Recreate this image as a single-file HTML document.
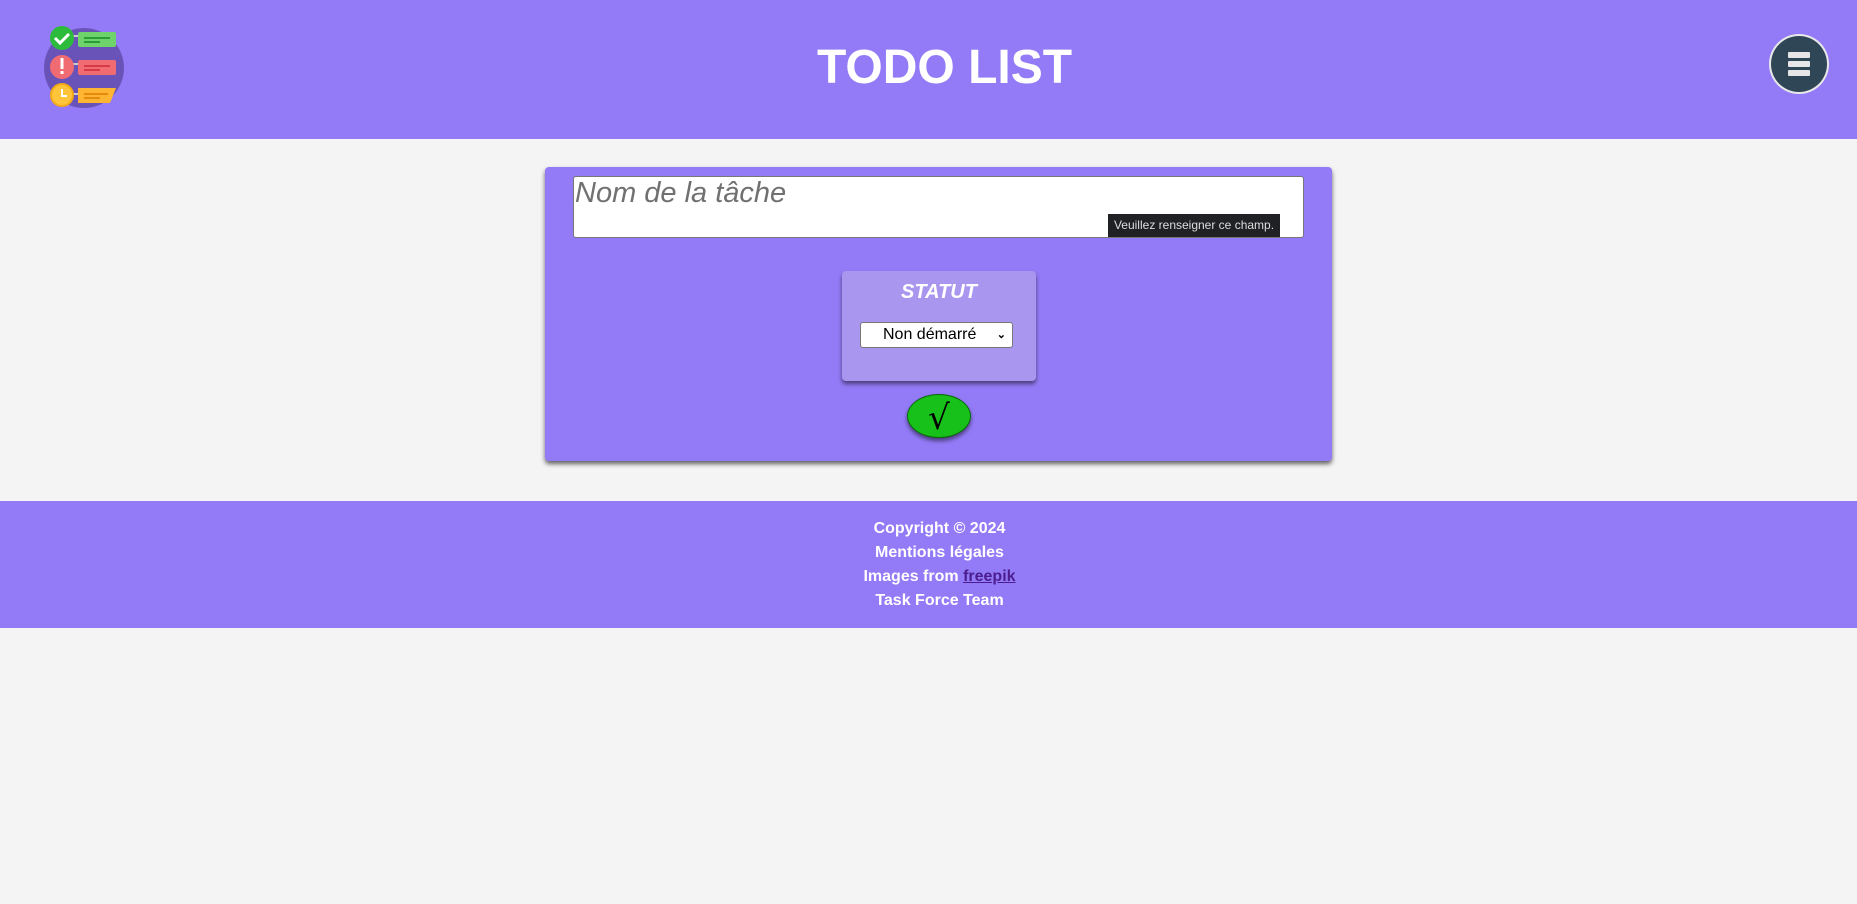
<!DOCTYPE html>
<html><head><meta charset="utf-8"><style>
*{box-sizing:border-box;margin:0;padding:0}
body{width:1857px;height:904px;background:#f4f4f4;font-family:"Liberation Sans",Arial,sans-serif;position:relative;overflow:hidden}
header{position:absolute;left:0;top:0;width:1857px;height:139px;background:#937bf7}
h1{position:absolute;left:16px;width:100%;top:39px;text-align:center;color:#fff;font-size:48px;font-weight:bold;line-height:58px}
.card{position:absolute;left:545px;top:167px;width:787px;height:294px;background:#937bf7;border-radius:4px;box-shadow:0 3px 5px rgba(0,0,0,.6)}
.ta{position:absolute;left:28px;top:9px;width:731px;height:62px;background:#fff;border:1px solid #777;border-radius:3px}
.ta span{position:absolute;left:1px;top:0;font-size:29px;font-style:italic;color:#707070}
.tip{position:absolute;left:563px;top:47px;width:172px;height:23px;background:#202124;color:#ddd;font-size:12px;line-height:23px;text-align:center}
.st{position:absolute;left:297px;top:104px;width:194px;height:110px;background:#a996ef;border-radius:4px;box-shadow:0 3px 4px rgba(0,0,0,.5)}
.st b{position:absolute;top:10px;width:100%;text-align:center;color:#fff;font-style:italic;font-size:20px}
.sel{position:absolute;left:18px;top:51px;width:153px;height:26px;background:#fff;border:1px solid #777;border-radius:3px;font-size:16px;line-height:24px;padding-left:22px}
.sel i{position:absolute;right:6px;top:0;font-style:normal;font-size:11px;font-weight:bold}
.btn{position:absolute;left:362px;top:227px;width:64px;height:44px;border-radius:50%;background:#18c11a;border:1px solid #0a6a0a;box-shadow:0 3px 4px rgba(0,0,0,.5);text-align:center;font-size:34px;line-height:46px;color:#000;font-family:"DejaVu Sans",sans-serif}
footer{position:absolute;left:0;top:501px;width:1857px;height:127px;background:#937bf7;color:#fff;font-weight:bold;font-size:16px;line-height:24px;text-align:center;padding-top:16px;padding-left:22px}
footer a{color:#4b1d8f;text-decoration:underline}
</style></head><body>
<header>
<svg style="position:absolute;left:40px;top:24px" width="88" height="88" viewBox="0 0 88 88">
<circle cx="44" cy="44" r="40" fill="#6a53b8"/>
<line x1="20" y1="12" x2="40" y2="12" stroke="#ccc" stroke-width="2"/>
<line x1="20" y1="40" x2="40" y2="40" stroke="#ccc" stroke-width="2"/>
<line x1="20" y1="70" x2="40" y2="70" stroke="#ccc" stroke-width="2"/>
<circle cx="22" cy="14" r="12" fill="#2dbb3c"/>
<path d="M15 14l5 5 9-9" stroke="#fff" stroke-width="3" fill="none"/>
<rect x="38" y="8" width="38" height="15" rx="2" fill="#6ed36b"/>
<rect x="44" y="13" width="26" height="2" fill="#2a9c36"/><rect x="44" y="17" width="16" height="2" fill="#2a9c36"/>
<circle cx="22" cy="43" r="12" fill="#f06b72"/>
<rect x="20.5" y="34" width="3" height="11" fill="#fff"/><rect x="20.5" y="47" width="3" height="3" fill="#fff"/>
<rect x="38" y="36" width="38" height="15" rx="2" fill="#f06b72"/>
<rect x="44" y="41" width="26" height="2" fill="#d63a44"/><rect x="44" y="45" width="16" height="2" fill="#d63a44"/>
<circle cx="22" cy="71" r="11" fill="#ffc53a" stroke="#f4a915" stroke-width="2"/>
<path d="M22 65v7h5" stroke="#fff" stroke-width="2" fill="none"/>
<path d="M38 64h38l-6 15h-32z" fill="#ffb531"/>
<rect x="44" y="69" width="24" height="2" fill="#e38a0f"/><rect x="44" y="73" width="16" height="2" fill="#e38a0f"/>
</svg>
<h1>TODO LIST</h1>
<svg style="position:absolute;left:1768px;top:33px" width="62" height="62" viewBox="0 0 62 62">
<circle cx="31" cy="31" r="30" fill="#e8e8e8"/>
<circle cx="31" cy="31" r="28" fill="#2f4656"/>
<rect x="20" y="19" width="22" height="6" rx="1" fill="#e6e6e6"/><rect x="20" y="28" width="22" height="6" rx="1" fill="#e6e6e6"/><rect x="20" y="37" width="22" height="6" rx="1" fill="#e6e6e6"/>
</svg>
</header>
<div class="card">
<div class="ta"><span>Nom de la tâche</span></div>
<div class="tip">Veuillez renseigner ce champ.</div>
<div class="st"><b>STATUT</b><div class="sel">Non démarré<i>⌄</i></div></div>
<div class="btn">√</div>
</div>
<footer>Copyright © 2024<br>Mentions légales<br>Images from <a>freepik</a><br>Task Force Team</footer>
</body></html>
